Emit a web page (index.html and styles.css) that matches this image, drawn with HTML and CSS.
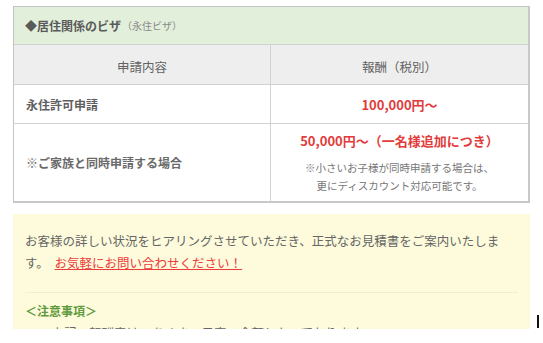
FILE: index.html
```html
<!DOCTYPE html>
<html lang="ja">
<head>
<meta charset="utf-8">
<title>居住関係のビザ</title>
<link rel="stylesheet" href="styles.css">
</head>
<body>
<div class="page">
  <div class="price-table">
    <div class="title">◆居住関係のビザ<span class="sub">（永住ビザ）</span></div>
    <div class="row head">
      <div class="cell">申請内容</div>
      <div class="cell">報酬（税別）</div>
    </div>
    <div class="row r2">
      <div class="cell label">永住許可申請</div>
      <div class="cell price">100,000円〜</div>
    </div>
    <div class="row r3">
      <div class="cell label">※ご家族と同時申請する場合</div>
      <div class="cell stack">
        <div class="price">50,000円〜（一名様追加につき）</div>
        <div class="note">※小さいお子様が同時申請する場合は、<br>更にディスカウント対応可能です。</div>
      </div>
    </div>
  </div>
  <div class="info">
    <p class="lead">お客様の詳しい状況をヒアリングさせていただき、正式なお見積書をご案内いたします。 <a href="#" class="link">お気軽にお問い合わせください！</a></p>
    <hr class="divider">
    <p class="caution">＜注意事項＞</p>
    <p class="text">・上記の報酬表は、あくまで目安の金額となっております。</p>
  </div>
  <span class="caret"></span>
</div>
</body>
</html>
```
FILE: styles.css
```css
html, body {
  margin: 0;
  padding: 0;
  background: #ffffff;
}
body {
  font-family: "Noto Sans CJK JP", "Noto Sans", sans-serif;
  color: #666666;
}
.page {
  position: relative;
  padding: 6px 0 0 13px;
  width: 517px;
}
.price-table {
  width: 517px;
  box-sizing: border-box;
  border: 1px solid #c4c4c4;
  border-right-width: 2px;
  border-bottom-width: 2px;
  border-right-color: #c8c8c8;
  border-bottom-color: #c8c8c8;
}
.title {
  height: 37px;
  background: #e2efdb;
  border-bottom: 1px solid #d2d2d2;
  display: flex;
  align-items: center;
  padding-left: 11px;
  font-size: 12px;
  font-weight: bold;
  color: #5a5a5a;
}
.sub {
  font-size: 10px;
  font-weight: normal;
  color: #8a8a8a;
  margin-left: 1px;
}
.row {
  display: grid;
  grid-template-columns: 256px 1fr;
  border-bottom: 1px solid #d2d2d2;
}
.row.r3 {
  border-bottom: none;
}
.cell {
  display: flex;
  align-items: center;
  font-size: 12px;
}
.cell + .cell {
  border-left: 1px solid #d2d2d2;
  justify-content: center;
}
.head .cell {
  height: 39px;
  background: #eeeeee;
  justify-content: center;
  color: #626262;
  font-size: 12.5px;
  padding-top: 3px;
  box-sizing: border-box;
}
.r2 .cell {
  height: 38px;
}
.r3 .cell {
  height: 77px;
}
.label {
  padding-left: 12px;
  font-weight: bold;
  color: #5f5f5f;
}
.r3 .label {
  color: #6a6a6a;
}
.price {
  color: #e23b3b;
  font-weight: bold;
  font-size: 13px;
}
.stack {
  flex-direction: column;
  justify-content: center;
}
.stack .price {
  line-height: 20px;
  margin-bottom: 8px;
}
.note {
  font-size: 10.5px;
  line-height: 18px;
  color: #777777;
  text-align: center;
}
.info {
  margin-top: 11px;
  height: 115px;
  overflow: hidden;
  background: #fdfbdc;
  padding: 16px 24px 0 12px;
  box-sizing: border-box;
}
.info p {
  margin: 0;
}
.lead {
  font-size: 12.5px;
  line-height: 22px;
  color: #666666;
}
.link {
  color: #ec3b3b;
  text-decoration: underline;
  margin-left: 3px;
}
.divider {
  border: none;
  border-top: 1px solid #f1eecb;
  margin: 18px -12px 7px 0;
}
.caution {
  font-size: 12px;
  line-height: 22px;
  font-weight: bold;
  color: #5f9a3c;
}
.text {
  font-size: 12.5px;
  line-height: 22px;
  color: #666666;
  padding-left: 14px;
}
.caret {
  position: absolute;
  left: 537px;
  top: 315px;
  width: 2px;
  height: 13px;
  background: #111111;
}
```
